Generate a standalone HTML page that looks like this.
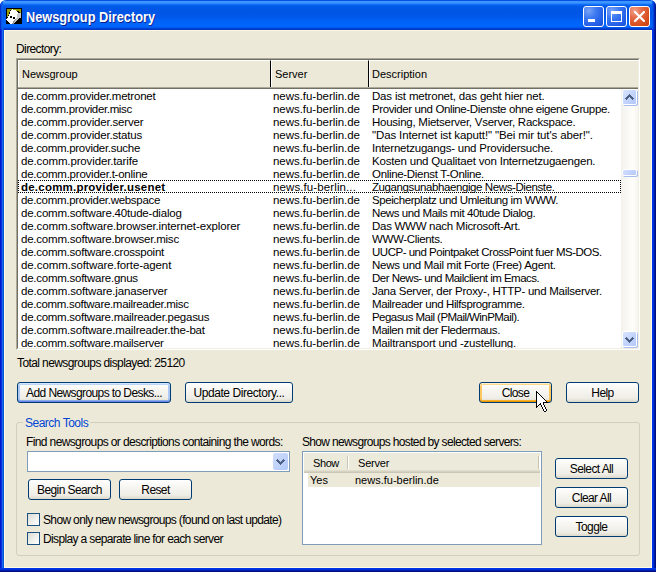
<!DOCTYPE html>
<html><head><meta charset="utf-8">
<style>
*{box-sizing:border-box}
html,body{margin:0;padding:0;width:656px;height:572px;overflow:hidden;background:#fff}
body{font-family:"Liberation Sans",sans-serif;font-size:11px;color:#000;position:relative}
.abs{position:absolute}
#title{position:absolute;left:0;top:0;width:656px;height:30px;border-radius:6px 6px 0 0;overflow:hidden;
 background:linear-gradient(to bottom,#0047DC 0px,#0A5CEB 1px,#3D95FF 1px,#3D95FF 3px,#1C7BFF 4px,#0862F0 5px,#0058E6 7px,#0055E5 12px,#0058EA 17px,#0062F7 21px,#0066FE 26px,#0062F8 27px,#0050E2 28px,#0038C8 29px,#0033C0 30px);}
#ttext{position:absolute;left:26px;top:9px;font-size:14px;font-weight:bold;letter-spacing:0;transform:scaleX(0.911);transform-origin:0 0;color:#fff;text-shadow:1px 1px 0 #0A1E8C;white-space:nowrap;line-height:16px}
#fl{position:absolute;left:0;top:29px;width:4px;height:543px;background:linear-gradient(to right,#0019CF 0,#0019CF 1px,#0831D9 1px,#0831D9 2px,#166AEE 2px,#166AEE 3px,#0855DD 3px)}
#fr{position:absolute;left:652px;top:29px;width:4px;height:543px;background:linear-gradient(to right,#0035E8 0,#0035E8 1px,#002FD8 1px,#002FD8 2px,#001AB0 2px,#001AB0 3px,#001080 3px)}
#fb{position:absolute;left:0;top:568px;width:656px;height:4px;background:linear-gradient(to bottom,#0035E8 0,#0035E8 1px,#002FD8 1px,#002FD8 2px,#001AB0 2px,#001AB0 3px,#001080 3px)}
#client{position:absolute;left:4px;top:30px;width:648px;height:538px;background:#ECE9D8;border:1px solid #FFF8E2}
.lbl{position:absolute;white-space:nowrap;line-height:13px;font-size:12px;letter-spacing:-0.6px}
/* main list */
#lv{position:absolute;left:16px;top:58px;width:624px;height:292px;border-style:solid;border-width:2px;border-color:#ACA899 #FFFFFF #FFFFFF #ACA899;background:#fff}
#lvin{position:absolute;left:0;top:0;right:0;bottom:0;border-style:solid;border-width:1px 1px 1px 1px;border-color:#716F64 #F1EFE2 #F1EFE2 #716F64;overflow:hidden}
#lvin{border:none}
#hdr{position:absolute;left:18px;top:60px;width:620px;height:29px;background:#ECE9D8;overflow:hidden}
.hi{position:absolute;top:0;height:27px;border-top:1px solid #fff;border-left:1px solid #fff;border-right:1px solid #000}
.ht{position:absolute;top:8px;line-height:13px;white-space:nowrap}
#rows{position:absolute;left:18px;top:89px;width:603px;height:259px;overflow:hidden;background:#fff}
.row{position:absolute;left:0;margin-top:1px;width:603px;height:13px;line-height:13px;white-space:nowrap;font-size:11.5px}
.row span{position:absolute;top:0;overflow:hidden}
.c1{left:3px;width:248px}
.c2{left:255px;width:92px}
.c3{left:354px;width:266px}
.bold .c1{font-weight:bold}
#focus{position:absolute;left:18px;top:180px;width:603px;height:13px;border:1px dotted #000}
/* scrollbar */
#sb{position:absolute;left:621px;top:89px;width:17px;height:259px;background:linear-gradient(to right,#F3F1EC,#FEFEFB 70%,#F6F5EF)}
.sbtn{position:absolute;left:1px;width:15px;height:16px;border-radius:2px;border:1px solid #fff;background:linear-gradient(135deg,#D9E4FE 0%,#C6D6FC 45%,#B3C8F8 100%);box-shadow:1px 1px 0 #A8BDEF}
.thumb{position:absolute;left:1px;width:15px;height:7px;border-radius:2px;border:1px solid #fff;background:linear-gradient(135deg,#D4E0FD 0%,#C3D4FC 50%,#B4C8F8 100%);box-shadow:1px 1px 0 #A8BDEF}
/* buttons */
.btn{position:absolute;height:21px;border:1px solid #003C74;border-radius:3px;background:linear-gradient(to bottom,#FFFFFF 0%,#F6F5F0 40%,#EEEDE6 80%,#DCD8CB 100%);text-align:center;line-height:19px;padding-top:1px;white-space:nowrap;font-size:12px;letter-spacing:-0.6px}
.btn.def{box-shadow:inset 0 -1px 0 #6982EE,inset 0 -2px 0 #8AAEE6,inset 0 1px 0 #CEE7FF,inset 0 2px 0 #BCD4F6,inset 2px 0 0 #ADC8F3,inset -2px 0 0 #ADC8F3}
.btn.hov{box-shadow:inset 0 -1px 0 #E59700,inset 0 -2px 0 #F8B330,inset 0 1px 0 #FFF0CF,inset 0 2px 0 #FDD889,inset 2px 0 0 #FBC761,inset -2px 0 0 #FBC761}
/* group box */
#grp{position:absolute;left:16px;top:422px;width:624px;height:134px;border:1px solid #D0D0BF;border-radius:3px}
#grplbl{position:absolute;left:23px;top:417px;padding:0 2px;background:#ECE9D8;color:#0046D5;line-height:13px;white-space:nowrap;font-size:12px;letter-spacing:-0.5px}
#combo{position:absolute;left:27px;top:451px;width:263px;height:21px;border:1px solid #7F9DB9;background:#fff}
#cbtn{position:absolute;left:245px;top:1px;width:15px;height:17px;border-radius:2px;background:linear-gradient(135deg,#D0DDFB 0%,#BFD1FB 60%,#B0C8F8 100%)}
.chk{position:absolute;width:13px;height:13px;border:1px solid #1C5180;background:linear-gradient(135deg,#DCDCD7 0%,#F2F2EE 60%,#FFFFFF 100%)}
#slv{position:absolute;left:302px;top:451px;width:240px;height:94px;border:1px solid #7F9DB9;background:#fff}
#shdr{position:absolute;left:1px;top:1px;width:236px;height:20px;background:linear-gradient(to bottom,#EBEADB 0,#EBEADB 17px,#E2DECD 17px,#E2DECD 18px,#D6D2C2 18px,#D6D2C2 19px,#CBC7B8 19px)}
.ssep{position:absolute;top:3px;width:2px;height:13px;border-left:1px solid #C7C5B2;border-right:1px solid #fff}
#ssel{position:absolute;left:5px;top:21px;width:232px;height:14px;background:#ECE9D8}
</style></head><body>
<div id="title">
 <svg class="abs" style="left:6px;top:8px" width="16" height="16" viewBox="0 0 16 16" shape-rendering="crispEdges"><rect width="16" height="16" fill="#000"/><rect x="1" y="1" width="5" height="1" fill="#9C9C00"/><rect x="6" y="1" width="1" height="1" fill="#fff"/><rect x="7" y="1" width="8" height="1" fill="#9C9C00"/><rect x="1" y="2" width="3" height="1" fill="#9C9C00"/><rect x="5" y="2" width="5" height="1" fill="#fff"/><rect x="10" y="2" width="5" height="1" fill="#9C9C00"/><rect x="1" y="3" width="3" height="1" fill="#9C9C00"/><rect x="4" y="3" width="7" height="1" fill="#fff"/><rect x="13" y="3" width="2" height="1" fill="#9C9C00"/><rect x="1" y="4" width="2" height="1" fill="#9C9C00"/><rect x="4" y="4" width="8" height="1" fill="#fff"/><rect x="14" y="4" width="1" height="1" fill="#9C9C00"/><rect x="1" y="5" width="2" height="1" fill="#9C9C00"/><rect x="4" y="5" width="8" height="1" fill="#fff"/><rect x="12" y="5" width="3" height="1" fill="#C8C8C8"/><rect x="1" y="6" width="2" height="1" fill="#9C9C00"/><rect x="3" y="6" width="8" height="1" fill="#fff"/><rect x="11" y="6" width="4" height="1" fill="#C8C8C8"/><rect x="1" y="7" width="1" height="1" fill="#9C9C00"/><rect x="3" y="7" width="8" height="1" fill="#fff"/><rect x="11" y="7" width="4" height="1" fill="#C8C8C8"/><rect x="1" y="8" width="1" height="1" fill="#9C9C00"/><rect x="2" y="8" width="2" height="1" fill="#fff"/><rect x="6" y="8" width="5" height="1" fill="#fff"/><rect x="11" y="8" width="4" height="1" fill="#C8C8C8"/><rect x="2" y="9" width="2" height="1" fill="#fff"/><rect x="6" y="9" width="1" height="1" fill="#fff"/><rect x="9" y="9" width="2" height="1" fill="#fff"/><rect x="11" y="9" width="4" height="1" fill="#C8C8C8"/><rect x="1" y="10" width="6" height="1" fill="#fff"/><rect x="9" y="10" width="1" height="1" fill="#fff"/><rect x="10" y="10" width="3" height="1" fill="#C8C8C8"/><rect x="0" y="11" width="9" height="1" fill="#fff"/><rect x="9" y="11" width="1" height="1" fill="#989898"/><rect x="10" y="11" width="2" height="1" fill="#C8C8C8"/><rect x="1" y="12" width="7" height="1" fill="#fff"/><rect x="8" y="12" width="1" height="1" fill="#989898"/><rect x="9" y="12" width="2" height="1" fill="#C8C8C8"/><rect x="2" y="13" width="5" height="1" fill="#fff"/><rect x="7" y="13" width="2" height="1" fill="#989898"/><rect x="9" y="13" width="1" height="1" fill="#C8C8C8"/><rect x="3" y="14" width="4" height="1" fill="#fff"/><rect x="7" y="14" width="1" height="1" fill="#989898"/><rect x="8" y="14" width="1" height="1" fill="#C8C8C8"/><rect x="4" y="15" width="2" height="1" fill="#fff"/><rect x="6" y="15" width="2" height="1" fill="#989898"/></svg>
 <div class="abs" style="left:0;top:0;width:3px;height:30px;background:linear-gradient(to right,#0030D0 0,#0030D0 1px,#0A52E4 1px,#0A52E4 2px,#0860EE 2px)"></div>
 <div class="abs" style="left:652px;top:0;width:4px;height:30px;background:linear-gradient(to right,#0558E8 0,#0558E8 1px,#0040D8 1px,#0040D8 2px,#0028B8 2px,#0028B8 3px,#001890 3px)"></div>
 <div id="ttext">Newsgroup Directory</div>
 <!-- min -->
 <div class="abs" style="left:583px;top:6px;width:21px;height:21px;border:1px solid #fff;border-radius:3px;background:radial-gradient(circle at 25% 20%,#79A3F7 0%,#3E7AF0 35%,#2460E8 70%,#1A4FD6 100%)">
  <div class="abs" style="left:4px;top:12px;width:7px;height:3px;background:#fff"></div>
 </div>
 <div class="abs" style="left:606px;top:6px;width:21px;height:21px;border:1px solid #fff;border-radius:3px;background:radial-gradient(circle at 25% 20%,#79A3F7 0%,#3E7AF0 35%,#2460E8 70%,#1A4FD6 100%)">
  <div class="abs" style="left:4px;top:4px;width:11px;height:11px;border:1px solid #fff;border-top-width:3px"></div>
 </div>
 <div class="abs" style="left:629px;top:6px;width:21px;height:21px;border:1px solid #fff;border-radius:3px;background:radial-gradient(circle at 25% 20%,#F0A08A 0%,#E46A46 35%,#D9501F 70%,#C83E0E 100%)">
  <svg class="abs" style="left:4px;top:4px" width="11" height="11" viewBox="0 0 11 11"><path d="M1 1L10 10M10 1L1 10" stroke="#fff" stroke-width="2.2" stroke-linecap="square"/></svg>
 </div>
</div>
<div id="fl"></div><div id="fr"></div><div id="fb"></div>
<div id="client"></div>

<div class="lbl" style="left:16px;top:43px">Directory:</div>

<div id="lv"></div>
<div class="abs" style="left:17px;top:59px;width:622px;height:290px;border-style:solid;border-width:1px;border-color:#716F64 #F1EFE2 #F1EFE2 #716F64"></div>
<div id="hdr">
 <div class="hi" style="left:0;width:253px"></div>
 <div class="hi" style="left:253px;width:98px"></div>
 <div class="hi" style="left:351px;width:300px"></div>
 <div class="abs" style="left:0;top:27px;width:620px;height:1px;background:#ACA899"></div><div class="abs" style="left:0;top:28px;width:620px;height:1px;background:#716F64"></div>
 <div class="ht" style="left:4px">Newsgroup</div>
 <div class="ht" style="left:257px">Server</div>
 <div class="ht" style="left:354px">Description</div>
</div>
<div id="rows">
<div class="row" style="top:0px"><span class="c1" style="letter-spacing:-0.221px">de.comm.provider.metronet</span><span class="c2" style="letter-spacing:-0.037px">news.fu-berlin.de</span><span class="c3" style="letter-spacing:-0.180px">Das ist metronet, das geht hier net.</span></div>
<div class="row" style="top:13px"><span class="c1" style="letter-spacing:-0.350px">de.comm.provider.misc</span><span class="c2" style="letter-spacing:-0.037px">news.fu-berlin.de</span><span class="c3" style="letter-spacing:-0.383px">Provider und Online-Dienste ohne eigene Gruppe.</span></div>
<div class="row" style="top:26px"><span class="c1" style="letter-spacing:-0.182px">de.comm.provider.server</span><span class="c2" style="letter-spacing:-0.037px">news.fu-berlin.de</span><span class="c3" style="letter-spacing:-0.251px">Housing, Mietserver, Vserver, Rackspace.</span></div>
<div class="row" style="top:39px"><span class="c1" style="letter-spacing:-0.182px">de.comm.provider.status</span><span class="c2" style="letter-spacing:-0.037px">news.fu-berlin.de</span><span class="c3" style="letter-spacing:-0.125px">&quot;Das Internet ist kaputt!&quot; &quot;Bei mir tut's aber!&quot;.</span></div>
<div class="row" style="top:52px"><span class="c1" style="letter-spacing:-0.286px">de.comm.provider.suche</span><span class="c2" style="letter-spacing:-0.037px">news.fu-berlin.de</span><span class="c3" style="letter-spacing:-0.221px">Internetzugangs- und Providersuche.</span></div>
<div class="row" style="top:65px"><span class="c1" style="letter-spacing:-0.136px">de.comm.provider.tarife</span><span class="c2" style="letter-spacing:-0.037px">news.fu-berlin.de</span><span class="c3" style="letter-spacing:-0.188px">Kosten und Qualitaet von Internetzugaengen.</span></div>
<div class="row" style="top:78px"><span class="c1" style="letter-spacing:-0.233px">de.comm.provider.t-online</span><span class="c2" style="letter-spacing:-0.037px">news.fu-berlin.de</span><span class="c3" style="letter-spacing:-0.318px">Online-Dienst T-Online.</span></div>
<div class="row bold" style="top:91px"><span class="c1" style="letter-spacing:0.218px">de.comm.provider.usenet</span><span class="c2" style="letter-spacing:0.106px">news.fu-berlin...</span><span class="c3" style="letter-spacing:-0.400px">Zugangsunabhaengige News-Dienste.</span></div>
<div class="row" style="top:104px"><span class="c1" style="letter-spacing:-0.292px">de.comm.provider.webspace</span><span class="c2" style="letter-spacing:-0.037px">news.fu-berlin.de</span><span class="c3" style="letter-spacing:-0.415px">Speicherplatz und Umleitung im WWW.</span></div>
<div class="row" style="top:117px"><span class="c1" style="letter-spacing:-0.207px">de.comm.software.40tude-dialog</span><span class="c2" style="letter-spacing:-0.037px">news.fu-berlin.de</span><span class="c3" style="letter-spacing:-0.416px">News und Mails mit 40tude Dialog.</span></div>
<div class="row" style="top:130px"><span class="c1" style="letter-spacing:-0.122px">de.comm.software.browser.internet-explorer</span><span class="c2" style="letter-spacing:-0.037px">news.fu-berlin.de</span><span class="c3" style="letter-spacing:-0.285px">Das WWW nach Microsoft-Art.</span></div>
<div class="row" style="top:143px"><span class="c1" style="letter-spacing:-0.218px">de.comm.software.browser.misc</span><span class="c2" style="letter-spacing:-0.037px">news.fu-berlin.de</span><span class="c3" style="letter-spacing:-0.345px">WWW-Clients.</span></div>
<div class="row" style="top:156px"><span class="c1" style="letter-spacing:-0.242px">de.comm.software.crosspoint</span><span class="c2" style="letter-spacing:-0.037px">news.fu-berlin.de</span><span class="c3" style="letter-spacing:-0.488px">UUCP- und Pointpaket CrossPoint fuer MS-DOS.</span></div>
<div class="row" style="top:169px"><span class="c1" style="letter-spacing:-0.089px">de.comm.software.forte-agent</span><span class="c2" style="letter-spacing:-0.037px">news.fu-berlin.de</span><span class="c3" style="letter-spacing:-0.286px">News und Mail mit Forte (Free) Agent.</span></div>
<div class="row" style="top:182px"><span class="c1" style="letter-spacing:-0.250px">de.comm.software.gnus</span><span class="c2" style="letter-spacing:-0.037px">news.fu-berlin.de</span><span class="c3" style="letter-spacing:-0.515px">Der News- und Mailclient im Emacs.</span></div>
<div class="row" style="top:195px"><span class="c1" style="letter-spacing:-0.165px">de.comm.software.janaserver</span><span class="c2" style="letter-spacing:-0.037px">news.fu-berlin.de</span><span class="c3" style="letter-spacing:-0.267px">Jana Server, der Proxy-, HTTP- und Mailserver.</span></div>
<div class="row" style="top:208px"><span class="c1" style="letter-spacing:-0.310px">de.comm.software.mailreader.misc</span><span class="c2" style="letter-spacing:-0.037px">news.fu-berlin.de</span><span class="c3" style="letter-spacing:-0.393px">Mailreader und Hilfsprogramme.</span></div>
<div class="row" style="top:221px"><span class="c1" style="letter-spacing:-0.265px">de.comm.software.mailreader.pegasus</span><span class="c2" style="letter-spacing:-0.037px">news.fu-berlin.de</span><span class="c3" style="letter-spacing:-0.548px">Pegasus Mail (PMail/WinPMail).</span></div>
<div class="row" style="top:234px"><span class="c1" style="letter-spacing:-0.171px">de.comm.software.mailreader.the-bat</span><span class="c2" style="letter-spacing:-0.037px">news.fu-berlin.de</span><span class="c3" style="letter-spacing:-0.440px">Mailen mit der Fledermaus.</span></div>
<div class="row" style="top:247px"><span class="c1" style="letter-spacing:-0.281px">de.comm.software.mailserver</span><span class="c2" style="letter-spacing:-0.037px">news.fu-berlin.de</span><span class="c3" style="letter-spacing:-0.231px">Mailtransport und -zustellung.</span></div>
</div>
<div id="focus"></div>
<div id="sb">
 <div class="sbtn" style="top:0px"><svg class="abs" style="left:2px;top:4px" width="9" height="6" viewBox="0 0 9 6" shape-rendering="crispEdges"><rect x="4" y="0" width="1" height="1" fill="#4D6185"/><rect x="3" y="1" width="3" height="1" fill="#4D6185"/><rect x="2" y="2" width="5" height="1" fill="#4D6185"/><rect x="1" y="3" width="3" height="1" fill="#4D6185"/><rect x="5" y="3" width="3" height="1" fill="#4D6185"/><rect x="0" y="4" width="3" height="1" fill="#4D6185"/><rect x="6" y="4" width="3" height="1" fill="#4D6185"/><rect x="1" y="5" width="1" height="1" fill="#4D6185"/><rect x="7" y="5" width="1" height="1" fill="#4D6185"/></svg></div>
 <div class="thumb" style="top:80px"></div>
 <div class="sbtn" style="top:242px"><svg class="abs" style="left:2px;top:5px" width="9" height="6" viewBox="0 0 9 6" shape-rendering="crispEdges"><rect x="1" y="0" width="1" height="1" fill="#4D6185"/><rect x="7" y="0" width="1" height="1" fill="#4D6185"/><rect x="0" y="1" width="3" height="1" fill="#4D6185"/><rect x="6" y="1" width="3" height="1" fill="#4D6185"/><rect x="1" y="2" width="3" height="1" fill="#4D6185"/><rect x="5" y="2" width="3" height="1" fill="#4D6185"/><rect x="2" y="3" width="5" height="1" fill="#4D6185"/><rect x="3" y="4" width="3" height="1" fill="#4D6185"/><rect x="4" y="5" width="1" height="1" fill="#4D6185"/></svg></div>
</div>

<div class="lbl" style="left:17px;top:357px">Total newsgroups displayed: 25120</div>

<div class="btn def" style="left:17px;top:382px;width:154px">Add Newsgroups to Desks...</div>
<div class="btn" style="left:185px;top:382px;width:108px;letter-spacing:-0.43px">Update Directory...</div>
<div class="btn hov" style="left:479px;top:382px;width:73px">Close</div>
<div class="btn" style="left:566px;top:382px;width:73px">Help</div>

<div id="grp"></div>
<div id="grplbl">Search Tools</div>
<div class="lbl" style="left:26px;top:436px;letter-spacing:-0.62px">Find newsgroups or descriptions containing the words:</div>
<div id="combo"><div id="cbtn"><svg class="abs" style="left:3px;top:6px" width="9" height="6" viewBox="0 0 9 6" shape-rendering="crispEdges"><rect x="1" y="0" width="1" height="1" fill="#4D6185"/><rect x="7" y="0" width="1" height="1" fill="#4D6185"/><rect x="0" y="1" width="3" height="1" fill="#4D6185"/><rect x="6" y="1" width="3" height="1" fill="#4D6185"/><rect x="1" y="2" width="3" height="1" fill="#4D6185"/><rect x="5" y="2" width="3" height="1" fill="#4D6185"/><rect x="2" y="3" width="5" height="1" fill="#4D6185"/><rect x="3" y="4" width="3" height="1" fill="#4D6185"/><rect x="4" y="5" width="1" height="1" fill="#4D6185"/></svg></div></div>
<div class="btn" style="left:28px;top:479px;width:83px">Begin Search</div>
<div class="btn" style="left:119px;top:479px;width:73px">Reset</div>
<div class="chk" style="left:27px;top:513px"></div>
<div class="lbl" style="left:43px;top:514px;letter-spacing:-0.65px">Show only new newsgroups (found on last update)</div>
<div class="chk" style="left:27px;top:532px"></div>
<div class="lbl" style="left:43px;top:533px;letter-spacing:-0.64px">Display a separate line for each server</div>

<div class="lbl" style="left:302px;top:436px;letter-spacing:-0.66px">Show newsgroups hosted by selected servers:</div>
<div id="slv">
 <div id="shdr">
  <div class="abs" style="left:9px;top:4px;line-height:13px;letter-spacing:-0.4px">Show</div>
  <div class="ssep" style="left:43px"></div>
  <div class="abs" style="left:54px;top:4px;line-height:13px;letter-spacing:-0.2px">Server</div>
  <div class="ssep" style="left:234px"></div>
 </div>
 <div id="ssel"></div>
 <div class="abs" style="left:7px;top:21px;line-height:14px">Yes</div>
 <div class="abs" style="left:52px;top:21px;line-height:14px">news.fu-berlin.de</div>
</div>
<div class="btn" style="left:555px;top:458px;width:73px">Select All</div>
<div class="btn" style="left:555px;top:487px;width:73px">Clear All</div>
<div class="btn" style="left:555px;top:516px;width:73px">Toggle</div>

<!-- cursor -->
<svg class="abs" style="left:536px;top:391px" width="12" height="21" viewBox="0 0 12 21" shape-rendering="crispEdges"><rect x="0" y="0" width="1" height="1" fill="#000"/><rect x="0" y="1" width="2" height="1" fill="#000"/><rect x="0" y="2" width="1" height="1" fill="#000"/><rect x="1" y="2" width="1" height="1" fill="#fff"/><rect x="2" y="2" width="1" height="1" fill="#000"/><rect x="0" y="3" width="1" height="1" fill="#000"/><rect x="1" y="3" width="2" height="1" fill="#fff"/><rect x="3" y="3" width="1" height="1" fill="#000"/><rect x="0" y="4" width="1" height="1" fill="#000"/><rect x="1" y="4" width="3" height="1" fill="#fff"/><rect x="4" y="4" width="1" height="1" fill="#000"/><rect x="0" y="5" width="1" height="1" fill="#000"/><rect x="1" y="5" width="4" height="1" fill="#fff"/><rect x="5" y="5" width="1" height="1" fill="#000"/><rect x="0" y="6" width="1" height="1" fill="#000"/><rect x="1" y="6" width="5" height="1" fill="#fff"/><rect x="6" y="6" width="1" height="1" fill="#000"/><rect x="0" y="7" width="1" height="1" fill="#000"/><rect x="1" y="7" width="6" height="1" fill="#fff"/><rect x="7" y="7" width="1" height="1" fill="#000"/><rect x="0" y="8" width="1" height="1" fill="#000"/><rect x="1" y="8" width="7" height="1" fill="#fff"/><rect x="8" y="8" width="1" height="1" fill="#000"/><rect x="0" y="9" width="1" height="1" fill="#000"/><rect x="1" y="9" width="8" height="1" fill="#fff"/><rect x="9" y="9" width="1" height="1" fill="#000"/><rect x="0" y="10" width="1" height="1" fill="#000"/><rect x="1" y="10" width="9" height="1" fill="#fff"/><rect x="10" y="10" width="1" height="1" fill="#000"/><rect x="0" y="11" width="1" height="1" fill="#000"/><rect x="1" y="11" width="6" height="1" fill="#fff"/><rect x="7" y="11" width="5" height="1" fill="#000"/><rect x="0" y="12" width="1" height="1" fill="#000"/><rect x="1" y="12" width="3" height="1" fill="#fff"/><rect x="4" y="12" width="1" height="1" fill="#000"/><rect x="5" y="12" width="2" height="1" fill="#fff"/><rect x="7" y="12" width="1" height="1" fill="#000"/><rect x="0" y="13" width="1" height="1" fill="#000"/><rect x="1" y="13" width="2" height="1" fill="#fff"/><rect x="3" y="13" width="2" height="1" fill="#000"/><rect x="5" y="13" width="2" height="1" fill="#fff"/><rect x="7" y="13" width="1" height="1" fill="#000"/><rect x="0" y="14" width="1" height="1" fill="#000"/><rect x="1" y="14" width="1" height="1" fill="#fff"/><rect x="2" y="14" width="1" height="1" fill="#000"/><rect x="5" y="14" width="1" height="1" fill="#000"/><rect x="6" y="14" width="2" height="1" fill="#fff"/><rect x="8" y="14" width="1" height="1" fill="#000"/><rect x="0" y="15" width="2" height="1" fill="#000"/><rect x="5" y="15" width="1" height="1" fill="#000"/><rect x="6" y="15" width="2" height="1" fill="#fff"/><rect x="8" y="15" width="1" height="1" fill="#000"/><rect x="0" y="16" width="1" height="1" fill="#000"/><rect x="6" y="16" width="1" height="1" fill="#000"/><rect x="7" y="16" width="2" height="1" fill="#fff"/><rect x="9" y="16" width="1" height="1" fill="#000"/><rect x="6" y="17" width="1" height="1" fill="#000"/><rect x="7" y="17" width="2" height="1" fill="#fff"/><rect x="9" y="17" width="1" height="1" fill="#000"/><rect x="7" y="18" width="1" height="1" fill="#000"/><rect x="8" y="18" width="2" height="1" fill="#fff"/><rect x="10" y="18" width="1" height="1" fill="#000"/><rect x="7" y="19" width="1" height="1" fill="#000"/><rect x="8" y="19" width="2" height="1" fill="#fff"/><rect x="10" y="19" width="1" height="1" fill="#000"/><rect x="8" y="20" width="2" height="1" fill="#000"/></svg>
</body></html>
